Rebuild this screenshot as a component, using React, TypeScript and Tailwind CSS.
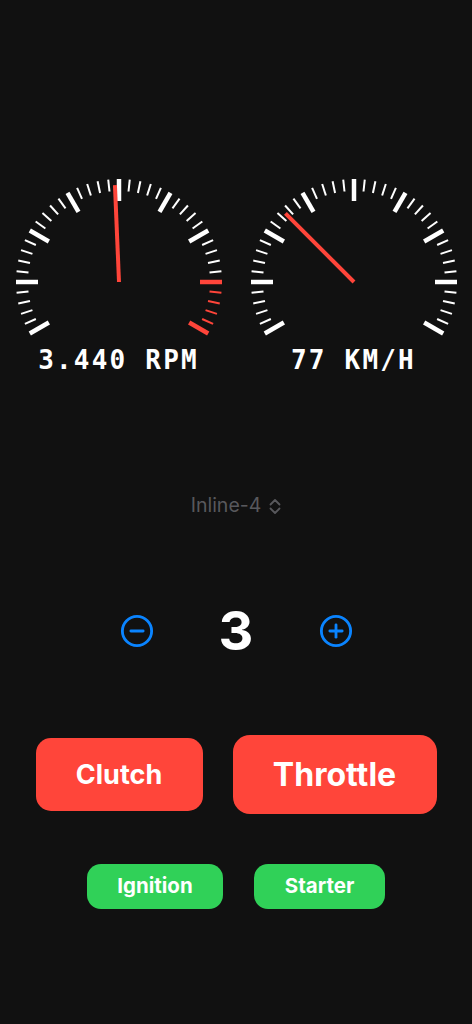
import React from "react";

const RED = "#ff453a";

function Gauge({ needle, redFrom, label }: { needle: number; redFrom?: number; label: string }) {
  const cx = 106;
  const cy = 106;
  const ticks = [];
  for (let i = 0; i <= 40; i++) {
    const a = -120 + i * 6;
    const major = i % 5 === 0;
    const rad = (a * Math.PI) / 180;
    const r1 = 103;
    const r2 = major ? 81 : 91;
    const color = redFrom !== undefined && a >= redFrom ? RED : "#ffffff";
    ticks.push(
      <line
        key={i}
        x1={cx + r1 * Math.sin(rad)}
        y1={cy - r1 * Math.cos(rad)}
        x2={cx + r2 * Math.sin(rad)}
        y2={cy - r2 * Math.cos(rad)}
        stroke={color}
        strokeWidth={major ? 4.5 : 2}
      />
    );
  }
  const nr = (needle * Math.PI) / 180;

  return (
    <div className="flex flex-col items-center">
      <svg width="212" height="170" viewBox="0 0 212 170">
        {ticks}
        <line
          x1={cx}
          y1={cy}
          x2={cx + 97 * Math.sin(nr)}
          y2={cy - 97 * Math.cos(nr)}
          stroke={RED}
          strokeWidth={4}
        />
      </svg>
      <div className="mt-[1px] text-[26px] leading-none font-bold tracking-[2.2px] text-white font-['DejaVu_Sans_Mono',monospace]">
        {label}
      </div>
    </div>
  );
}

function CircleIcon({ plus }: { plus?: boolean }) {
  return (
    <svg width="36" height="36" viewBox="0 0 36 36" fill="none" stroke="#0a84ff" strokeWidth="3" strokeLinecap="round">
      <circle cx="18" cy="18" r="15.5" />
      <line x1="11.5" y1="18" x2="24.5" y2="18" />
      {plus && <line x1="18" y1="11.5" x2="18" y2="24.5" />}
    </svg>
  );
}

export default function App() {
  return (
    <div className="w-[472px] h-[1024px] bg-[#111111] flex flex-col items-center font-['Inter',sans-serif] overflow-hidden">
      {/* gauges */}
      <div className="mt-[176px] flex justify-center gap-[23px]">
        <Gauge needle={-2.4} redFrom={90} label="3.440 RPM" />
        <Gauge needle={-45} label="77 KM/H" />
      </div>

      {/* engine picker */}
      <div className="mt-[113px] h-[40px] flex items-center gap-[8px] text-[#58585c]">
        <span className="text-[19.5px] leading-none">Inline-4</span>
        <svg width="12" height="17" viewBox="0 0 12 17" fill="none" stroke="#58585c" strokeWidth="1.8" strokeLinecap="round" strokeLinejoin="round">
          <path d="M1.5 6.5 6 2l4.5 4.5" />
          <path d="M1.5 10.5 6 15l4.5-4.5" />
        </svg>
      </div>

      {/* cylinder stepper */}
      <div className="mt-[80px] h-[50px] flex items-center">
        <button className="w-[34px] h-[34px] flex items-center justify-center">
          <CircleIcon />
        </button>
        <div className="w-[165px] text-center text-white font-bold text-[54px] leading-none">3</div>
        <button className="w-[34px] h-[34px] flex items-center justify-center">
          <CircleIcon plus />
        </button>
      </div>

      {/* pedals */}
      <div className="mt-[79px] h-[79px] flex items-center gap-[30px]">
        <button className="w-[167px] h-[73px] rounded-[15px] bg-[#ff453a] text-white font-bold text-[27px] leading-none">
          Clutch
        </button>
        <button className="w-[204px] h-[79px] rounded-[17px] bg-[#ff453a] text-white font-bold text-[32px] leading-none">
          Throttle
        </button>
      </div>

      {/* switches */}
      <div className="mt-[50px] h-[45px] flex items-center gap-[31px]">
        <button className="w-[136px] h-[45px] rounded-[14px] bg-[#30d158] text-white font-bold text-[20.5px] leading-none">
          Ignition
        </button>
        <button className="w-[131px] h-[45px] rounded-[14px] bg-[#30d158] text-white font-bold text-[20.5px] leading-none">
          Starter
        </button>
      </div>
    </div>
  );
}
